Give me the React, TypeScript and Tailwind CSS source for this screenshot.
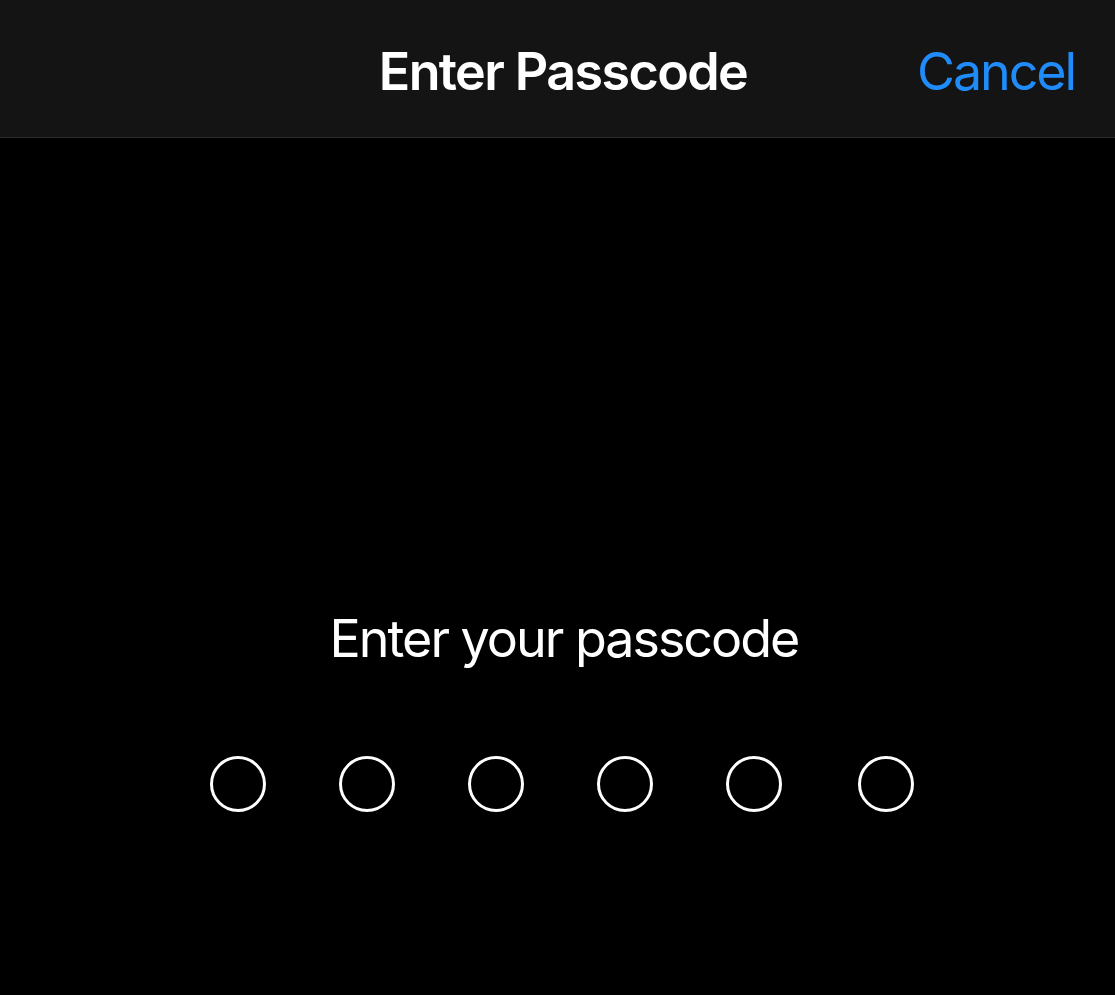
import React from "react";

const Dot: React.FC = () => (
  <div className="h-[56px] w-[56px] rounded-full border-[3px] border-white" />
);

const App: React.FC = () => {
  return (
    <div className="min-h-[995px] bg-black text-white" style={{ fontFamily: "Inter, 'Noto Sans', sans-serif" }}>
      <header className="grid h-[138px] grid-cols-[1fr_auto_1fr] border-b border-[#2a2a2a] bg-[#141414] pl-[11px]">
        <div />
        <h1 className="mt-[41px] text-[52px] font-semibold leading-[62px] tracking-[-1.6px]">Enter Passcode</h1>
        <div className="flex justify-end pr-[40px]">
          <button className="mt-[41px] self-start text-[52px] leading-[62px] tracking-[-2.1px] text-[#208cfa]">Cancel</button>
        </div>
      </header>
      <main className="flex flex-col items-center pl-[13px]">
        <p className="mt-[470px] text-[52px] leading-[62px] tracking-[-2px]">Enter your passcode</p>
        <div className="mt-[86px] flex gap-[73px] pr-[4px]">
          <Dot />
          <Dot />
          <Dot />
          <Dot />
          <Dot />
          <div className="ml-[3px]">
            <Dot />
          </div>
        </div>
      </main>
    </div>
  );
};

export default App;
